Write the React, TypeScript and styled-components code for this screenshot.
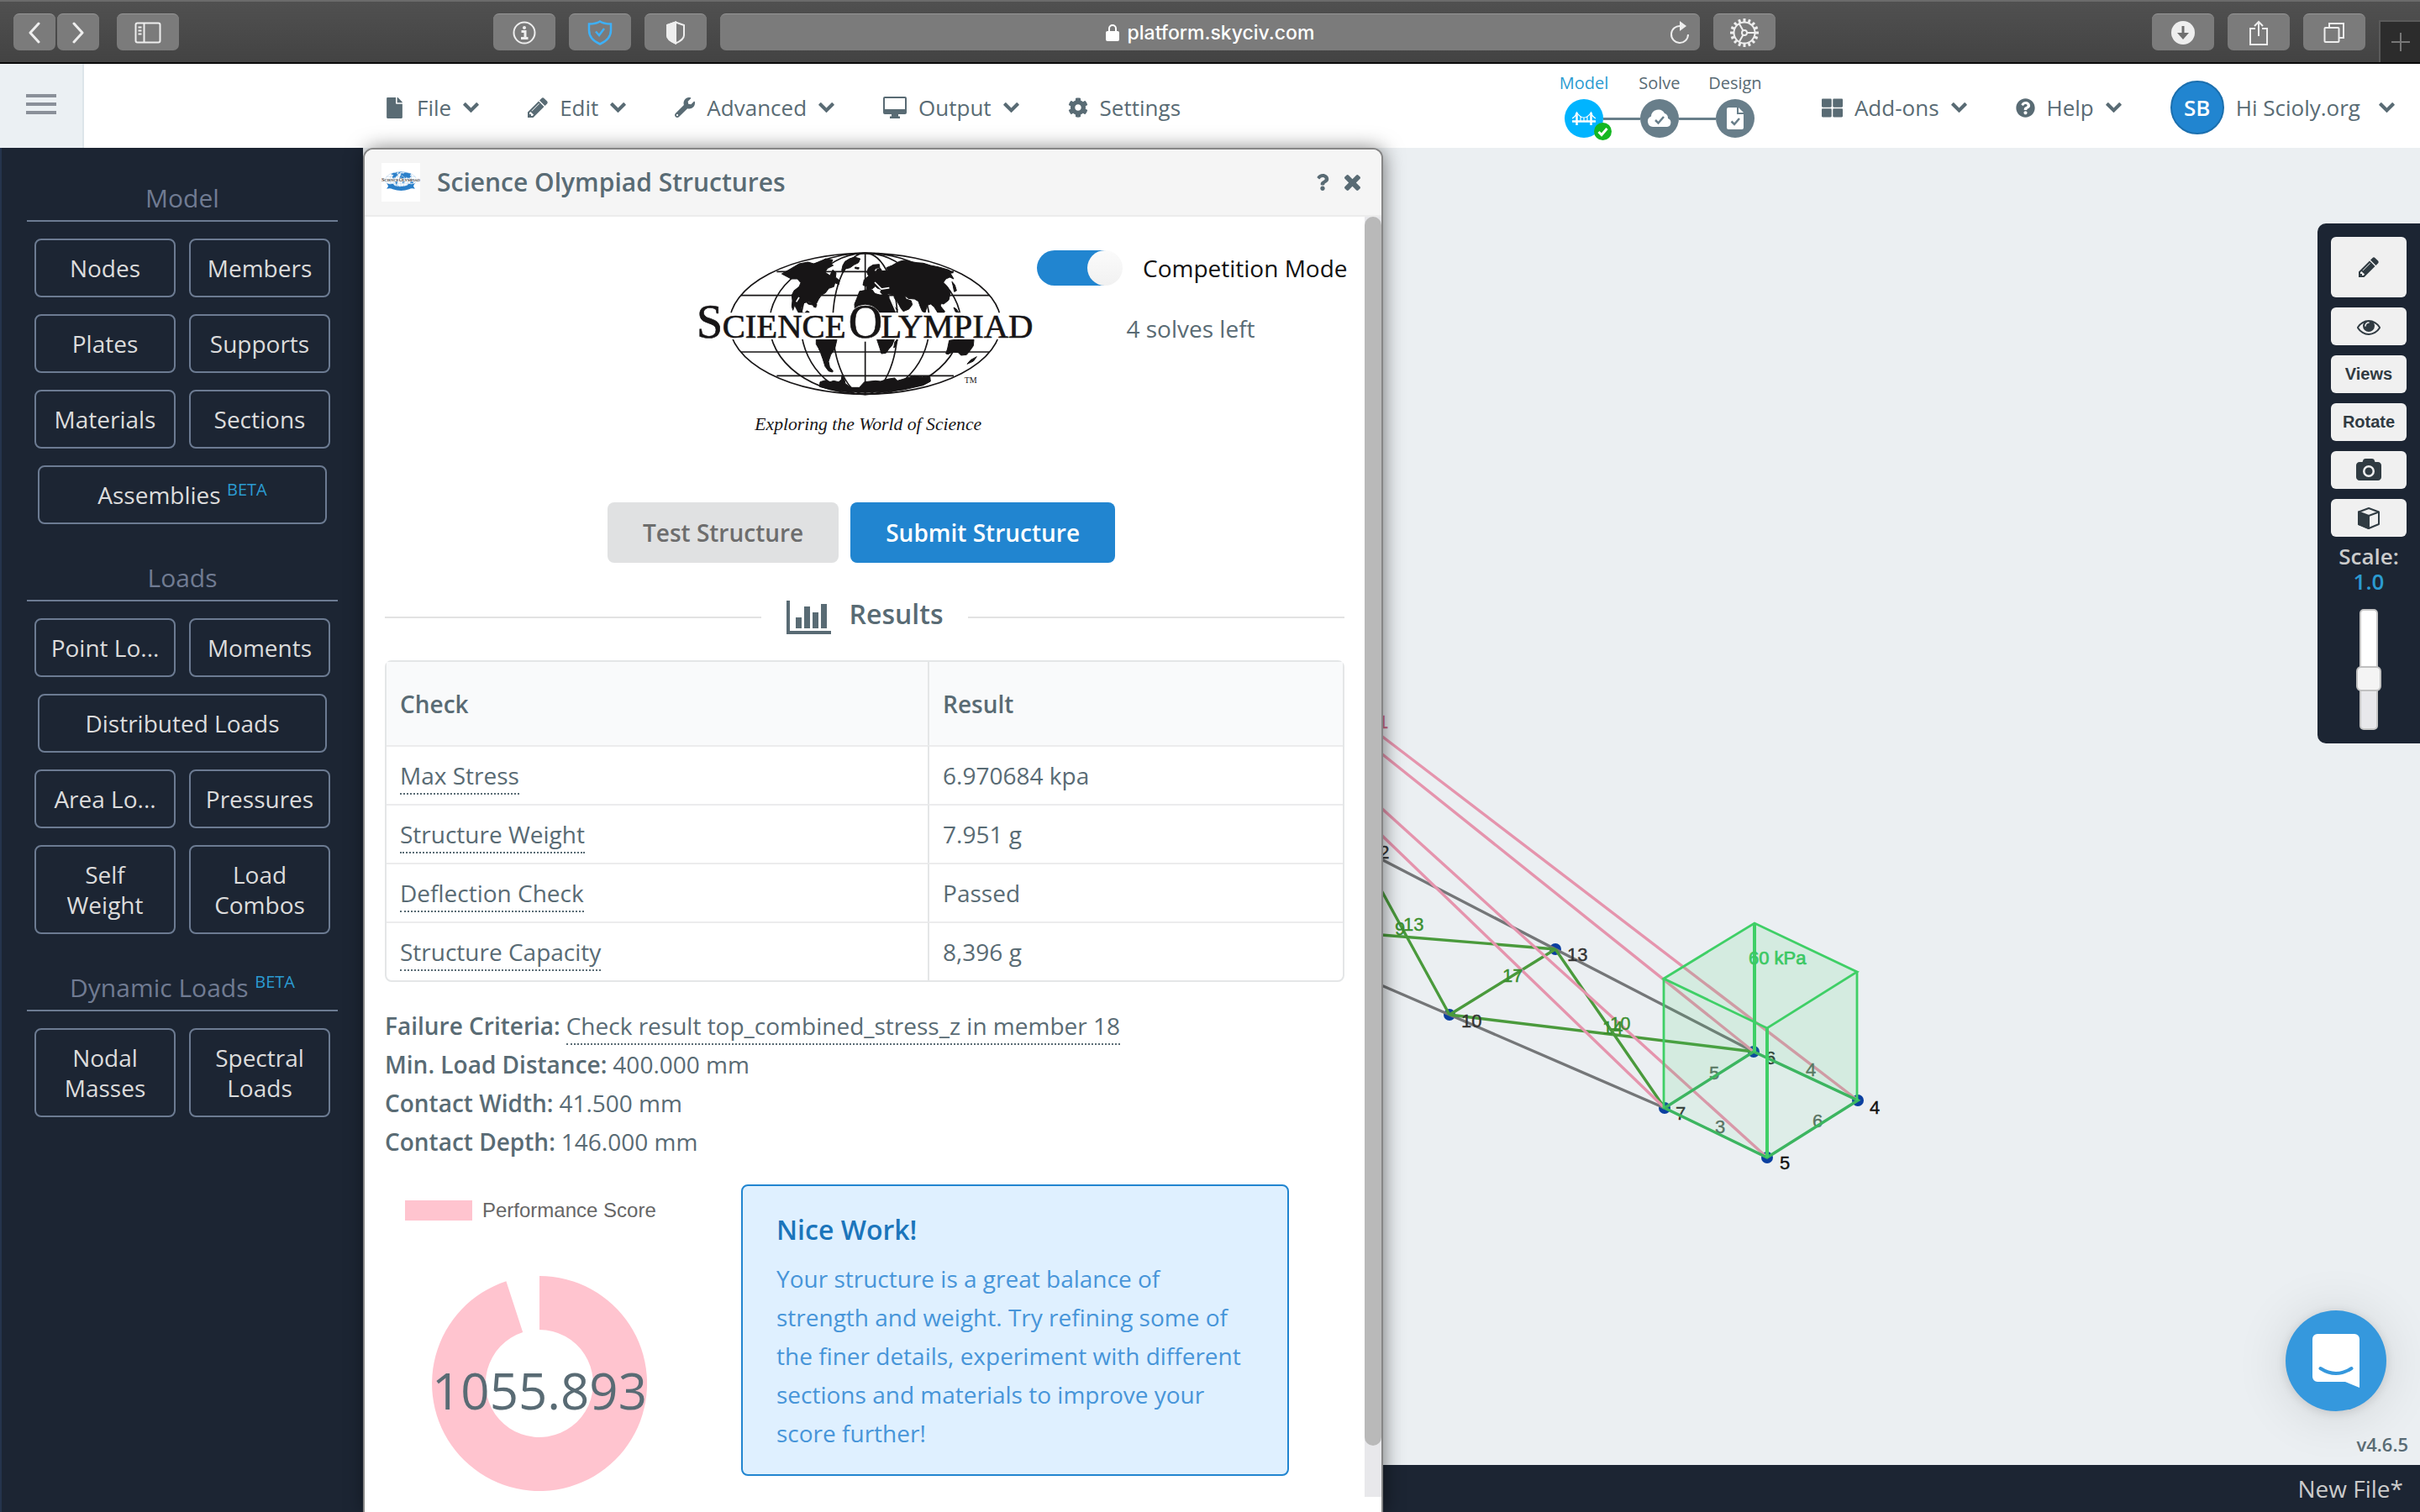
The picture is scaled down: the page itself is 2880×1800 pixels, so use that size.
import React from "react";
import styled, { createGlobalStyle, css } from "styled-components";
import {
  FaWrench,
  FaCog,
  FaQuestionCircle,
  FaQuestion,
  FaThLarge,
  FaFile,
} from "react-icons/fa";

const color = {
  slate: "#596b74",
  blue: "#2185d0",
  sky: "#2b9bd1",
  navy: "#1c2533",
  line: "#6c7b92",
  canvas: "#ebeff2",
};
const sans = `"Open Sans", "Noto Sans", sans-serif`;
const helvetica = `"Liberation Sans", Arial, sans-serif`;

const GlobalStyle = createGlobalStyle`
  * { box-sizing: border-box; }
  body { margin: 0; font-family: ${sans}; font-size: 28px; color: ${color.slate}; background: ${color.canvas}; }
  button, input { font: inherit; color: inherit; margin: 0; }
  button { cursor: pointer; }
  svg { display: block; flex: none; }
`;

const Page = styled.div`
  display: flex;
  flex-direction: column;
  height: 100vh;
  overflow: hidden;
`;

/* ---------- browser chrome ---------- */

const Chrome = styled.header`
  display: grid;
  grid-template-columns: 571px minmax(0, 1fr) 767px;
  align-items: center;
  height: 76px;
  padding-left: 16px;
  flex: none;
  color: #eee;
  background: linear-gradient(#505050, #434343);
  border-top: 2px solid #6b6b6b;
  border-bottom: 2px solid #0a0a0a;
`;
const ChromeGroup = styled.div<{ $gap: number; $end?: boolean }>`
  display: flex;
  align-items: center;
  gap: ${(p) => p.$gap}px;
  ${(p) =>
    p.$end &&
    css`
      align-self: stretch;
      justify-content: flex-end;
    `}
`;
const ChromeButton = styled.button<{ $narrow?: boolean }>`
  display: flex;
  align-items: center;
  justify-content: center;
  width: ${(p) => (p.$narrow ? 50 : 74)}px;
  height: 44px;
  padding: 0;
  flex: none;
  border: 0;
  border-top: 1px solid #979797;
  border-radius: 7px;
  background: #7b7b7b;
`;
const AddressBar = styled.div`
  display: flex;
  align-items: center;
  flex: 1;
  height: 44px;
  padding: 0 12px 0 36px;
  border-top: 1px solid #979797;
  border-radius: 7px;
  background: #7b7b7b;
`;
const Address = styled.a`
  display: flex;
  align-items: center;
  justify-content: center;
  gap: 10px;
  flex: 1;
  color: #fff;
  font: 500 23px Inter, sans-serif;
  text-decoration: none;
`;
const BareButton = styled.button`
  display: flex;
  align-items: center;
  padding: 0;
  border: 0;
  background: none;
`;
const NewTab = styled.button`
  display: flex;
  align-items: center;
  justify-content: center;
  align-self: flex-end;
  width: 49px;
  height: 50px;
  padding: 0;
  border: 2px solid #5a5a5a;
  border-width: 2px 0 0 2px;
  background: #2c2c2c;
`;

/* ---------- application header ---------- */

const TopBar = styled.div`
  display: flex;
  height: 100px;
  padding-right: 30px;
  flex: none;
  background: #fff;
`;
const Burger = styled.button`
  display: flex;
  flex-direction: column;
  align-items: center;
  justify-content: center;
  gap: 6px;
  width: 100px;
  padding: 0 0 4px;
  border: 0;
  border-right: 2px solid #dde5ea;
  background: #ebf0f3;
`;
const BurgerLine = styled.span`
  width: 36px;
  height: 4px;
  background: #8a9099;
`;
const Menu = styled.nav`
  display: flex;
  align-items: center;
  gap: 58px;
  padding: 4px 0 0 357px;
  flex: 1;
`;
const MenuEnd = styled.div`
  display: flex;
  align-items: center;
  gap: 58px;
  padding-top: 4px;
`;
const MenuItem = styled.button`
  display: flex;
  align-items: center;
  gap: 14px;
  padding: 0;
  border: 0;
  background: none;
  font-size: 26px;
  line-height: 36px;
  white-space: nowrap;
`;
const Avatar = styled.span`
  display: flex;
  align-items: center;
  justify-content: center;
  width: 64px;
  height: 64px;
  border: 2px solid #1b6fae;
  border-radius: 50%;
  background: ${color.blue};
  color: #fff;
  font-weight: 600;
`;
const UserName = styled.span`
  padding-right: 8px;
`;
const Steps = styled.div`
  display: flex;
  padding: 11px 58px 0 0;
`;
const Step = styled.button<{ $active?: boolean }>`
  position: relative;
  display: flex;
  flex-direction: column;
  align-items: center;
  gap: 7px;
  width: 90px;
  padding: 0;
  border: 0;
  background: none;
  font-size: 20px;
  line-height: 24px;
  color: ${(p) => (p.$active ? color.sky : color.slate)};
  &:not(:first-child)::before {
    content: "";
    position: absolute;
    top: 53px;
    left: -22px;
    width: 44px;
    height: 3px;
    background: #687e8a;
  }
`;
const StepDisc = styled.span<{ $active?: boolean }>`
  position: relative;
  display: flex;
  align-items: center;
  justify-content: center;
  width: 46px;
  height: 46px;
  border-radius: 50%;
  background: ${(p) => (p.$active ? "#00b4ff" : "#687e8a")};
`;
const DoneBadge = styled.span`
  position: absolute;
  right: -10px;
  bottom: -3px;
`;

/* ---------- side bar ---------- */

const Main = styled.main`
  display: flex;
  flex: 1;
  min-height: 0;
`;
const SideBar = styled.aside`
  display: flex;
  flex-direction: column;
  gap: 44px;
  width: 432px;
  padding: 40px 30px 0;
  flex: none;
  border-left: 2px solid #25344c;
  background: ${color.navy};
`;
const SideHeading = styled.h2`
  margin: 0 0 20px;
  padding-bottom: 6px;
  border-bottom: 2px solid ${color.line};
  font-size: 30px;
  font-weight: 400;
  line-height: 40px;
  text-align: center;
  color: #707b92;
`;
const SideGrid = styled.div`
  display: grid;
  grid-template-columns: 1fr 1fr;
  gap: 20px 16px;
  padding: 0 9px;
`;
const SideButton = styled.button<{ $wide?: boolean }>`
  padding: 15px 8px;
  border: 2px solid ${color.line};
  border-radius: 8px;
  background: none;
  font-size: 28px;
  line-height: 36px;
  color: #dcdcdc;
  white-space: pre-line;
  ${(p) =>
    p.$wide &&
    css`
      grid-column: 1 / -1;
      margin: 0 4px;
    `}
`;
const Beta = styled.sup`
  font-size: 20px;
  line-height: 0;
  color: ${color.sky};
`;

/* ---------- workspace ---------- */

const Workspace = styled.section`
  position: relative;
  display: flex;
  flex-direction: column;
  flex: 1;
  min-width: 0;
`;
const Viewport = styled.div`
  position: relative;
  flex: 1;
  min-height: 0;
  overflow: hidden;
  background: ${color.canvas};
`;
const StatusBar = styled.footer`
  display: flex;
  justify-content: flex-end;
  padding: 8px 20px;
  background: ${color.navy};
  color: #cbcbcb;
  line-height: 40px;
`;
const Version = styled.span`
  position: absolute;
  right: 14px;
  bottom: 10px;
  font-size: 22px;
  font-weight: 600;
  line-height: 30px;
`;
const Chat = styled.button`
  position: absolute;
  right: 40px;
  bottom: 64px;
  display: flex;
  align-items: center;
  justify-content: center;
  width: 120px;
  height: 120px;
  padding: 0;
  border: 0;
  border-radius: 50%;
  background: #3598dd;
  box-shadow: 0 2px 12px rgba(0, 0, 0, 0.12), 0 4px 64px rgba(0, 0, 0, 0.12);
`;
const ToolPanel = styled.div`
  position: absolute;
  top: 90px;
  right: 0;
  display: flex;
  flex-direction: column;
  align-items: center;
  gap: 12px;
  width: 122px;
  padding: 16px;
  border-radius: 10px 0 0 10px;
  background: ${color.navy};
`;
const Tool = styled.button<{ $tall?: boolean }>`
  display: flex;
  align-items: center;
  justify-content: center;
  width: 90px;
  height: ${(p) => (p.$tall ? 72 : 45)}px;
  padding: 0;
  border: 0;
  border-radius: 6px;
  background: #f0f0f0;
  color: #303b42;
  font: 700 20px ${helvetica};
`;
const ScaleLabel = styled.label`
  display: flex;
  flex-direction: column;
  align-items: center;
  margin: -4px 0 6px;
  font-size: 26px;
  font-weight: 600;
  line-height: 30px;
  color: #cbcbcb;
`;
const ScaleValue = styled.span`
  color: ${color.sky};
`;
const ScaleSlider = styled.input`
  writing-mode: vertical-lr;
  direction: rtl;
  appearance: none;
  width: 30px;
  height: 144px;
  background: none;
  &::-webkit-slider-runnable-track {
    width: 22px;
    margin: 0 4px;
    border: 2px solid #c6c6c6;
    border-radius: 5px;
    background: linear-gradient(#fff 60%, #e8e8eb 60%);
  }
  &::-webkit-slider-thumb {
    appearance: none;
    width: 30px;
    height: 30px;
    margin-left: -6px;
    border: 2px solid #c0c0c0;
    border-radius: 6px;
    background: #f4f4f4;
  }
`;

/* ---------- results window ---------- */

const Window = styled.section`
  position: absolute;
  top: 2px;
  bottom: 0;
  left: 2px;
  display: flex;
  flex-direction: column;
  width: 1210px;
  border-radius: 10px 10px 0 0;
  background: #fff;
  box-shadow: 0 0 0 2px #868686, 2px 0 24px rgba(0, 0, 0, 0.55);
  overflow: clip;
  overflow-clip-margin: 30px;
`;
const WindowBar = styled.div`
  display: flex;
  align-items: center;
  gap: 20px;
  height: 80px;
  padding: 0 25px 0 20px;
  flex: none;
  border-bottom: 2px solid #ececec;
  border-radius: 10px 10px 0 0;
  background: #f5f5f5;
`;
const WindowTools = styled.div`
  display: flex;
  align-items: center;
  gap: 16px;
`;
const LogoTile = styled.span`
  display: flex;
  align-items: center;
  width: 46px;
  height: 46px;
  background: #fff;
`;
const WindowTitle = styled.h1`
  margin: 0;
  flex: 1;
  font-size: 30px;
  font-weight: 600;
  line-height: 40px;
`;
const WindowBody = styled.div`
  display: flex;
  flex: 1;
  min-height: 0;
`;
const ScrollTrack = styled.div`
  width: 20px;
  margin-bottom: 18px;
  background: #e8e8eb;
`;
const ScrollThumb = styled.div`
  height: 96%;
  border-radius: 10px;
  background: #b9b9b9;
`;
const Content = styled.div`
  flex: 1;
  min-width: 0;
  padding: 22px 24px 0;
`;
const Intro = styled.div`
  display: grid;
  grid-template-columns: minmax(0, 1fr) 400px minmax(0, 1fr);
`;
const ModePanel = styled.div`
  grid-column: 3;
  padding: 18px 0 0 5px;
`;
const ModeLabel = styled.label`
  display: flex;
  align-items: center;
  gap: 24px;
  line-height: 42px;
  color: #111;
  white-space: nowrap;
`;
const Toggle = styled.input`
  appearance: none;
  display: flex;
  justify-content: flex-end;
  width: 102px;
  height: 42px;
  flex: none;
  border-radius: 21px;
  background: linear-gradient(90deg, ${color.blue} 80%, transparent 80%);
  &::before {
    content: "";
    width: 42px;
    height: 42px;
    border-radius: 50%;
    background: linear-gradient(#fbfbfb, #f1f1f1);
  }
`;
const SolvesLeft = styled.p`
  margin: 30px 0 0;
  line-height: 42px;
  text-align: center;
`;
const Actions = styled.div`
  display: flex;
  justify-content: center;
  gap: 14px;
  margin: 58px 8px 45px 0;
`;
const Action = styled.button<{ $primary?: boolean }>`
  height: 72px;
  padding: 0 42px;
  border: 0;
  border-radius: 8px;
  background: ${(p) => (p.$primary ? color.blue : "#e0e1e2")};
  color: ${(p) => (p.$primary ? "#fff" : "#6d6d6d")};
  font-weight: 600;
`;
const ResultsHeading = styled.h2`
  display: flex;
  align-items: center;
  gap: 30px;
  height: 40px;
  margin: 0 0 31px;
  font-size: 32px;
  font-weight: 600;
  line-height: 32px;
  &::before,
  &::after {
    content: "";
    flex: 1;
    height: 2px;
    background: #e2e2e2;
  }
`;
const ResultsName = styled.span`
  display: flex;
  align-items: flex-start;
  gap: 22px;
`;
const ResultTable = styled.table`
  width: 100%;
  table-layout: fixed;
  border: 2px solid #e4e6e7;
  border-radius: 8px;
  border-spacing: 0;
  line-height: 36px;
  text-align: left;
`;
const HeadCell = styled.th<{ $wide?: boolean }>`
  width: ${(p) => (p.$wide ? "56.6%" : "auto")};
  height: 99px;
  padding: 0 16px;
  border-left: ${(p) => (p.$wide ? "0" : "2px solid #e4e6e7")};
  background: #f9fafb;
  font-weight: 600;
`;
const Cell = styled.td`
  height: 70px;
  padding: 0 16px 1px;
  border-top: 2px solid #ececed;
  & + & {
    border-left: 2px solid #e4e6e7;
  }
`;
const Hint = styled.abbr`
  padding-bottom: 2px;
  border-bottom: 2px dotted ${color.slate};
  text-decoration: none;
`;
const Facts = styled.dl`
  margin: 29px 0 28px;
  line-height: 46px;
`;
const Fact = styled.div`
  display: flex;
  gap: 7px;
`;
const FactName = styled.dt`
  font-weight: 600;
`;
const FactValue = styled.dd`
  margin: 0;
`;
const Outcome = styled.div`
  display: flex;
  align-items: flex-start;
`;
const Score = styled.figure`
  width: 424px;
  margin: 0;
  padding: 16px 0 0 24px;
`;
const Legend = styled.figcaption`
  display: flex;
  align-items: center;
  gap: 12px;
  margin-bottom: 63px;
  color: #666;
  font: 24px/30px ${helvetica};
`;
const Swatch = styled.span`
  width: 80px;
  height: 24px;
  background: #ffc4cf;
`;
const Donut = styled.svg`
  margin-left: 32px;
  overflow: visible;
`;
const Message = styled.div`
  width: 652px;
  padding: 30px 40px 26px;
  border: 2px solid ${color.blue};
  border-radius: 8px;
  background: #dff0ff;
  color: #4795d9;
`;
const MessageTitle = styled.h3`
  margin: 0 0 13px;
  font-size: 32px;
  font-weight: 600;
  line-height: 44px;
  color: #1b75bb;
`;
const MessageText = styled.p`
  margin: 0;
  line-height: 46px;
`;

/* ---------- icons ---------- */

const ChevronDown = () => (
  <svg width="19" height="12" viewBox="90 533 1612 1035" fill="currentColor">
    <path d="M1683 808l-742 741q-19 19-45 19t-45-19l-742-741q-19-19-19-45.500t19-45.500l166-165q19-19 45-19t45 19l531 531 531-531q19-19 45-19t45 19l166 165q19 19 19 45.500t-19 45.500z" />
  </svg>
);
const CloseIcon = () => (
  <svg width="19" height="19" viewBox="302 366 1188 1188" fill="currentColor">
    <path d="M1490 1322q0 40-28 68l-136 136q-28 28-68 28t-68-28l-294-294-294 294q-28 28-68 28t-68-28l-136-136q-28-28-28-68t28-68l294-294-294-294q-28-28-28-68t28-68l136-136q28-28 68-28t68 28l294 294 294-294q28-28 68-28t68 28l136 136q28 28 28 68t-28 68l-294 294 294 294q28 28 28 68z" />
  </svg>
);
const PencilIcon = ({ size = 26 }: { size?: number }) => (
  <svg width={size} height={size} viewBox="128 128 1536 1536" fill="currentColor">
    <path d="M491 1536l91-91-235-235-91 91v107h128v128h107zm523-928q0-22-22-22-10 0-17 7l-542 542q-7 7-7 17 0 22 22 22 10 0 17-7l542-542q7-7 7-17zm-54-192l416 416-832 832h-416v-416zm683 96q0 53-37 90l-166 166-416-416 166-165q36-38 90-38 53 0 91 38l235 234q37 39 37 91z" />
  </svg>
);
const EyeIcon = () => (
  <svg width="28" height="28" viewBox="0 0 1792 1792" fill="currentColor">
    <path d="M1664 960q-152-236-381-353 61 104 61 225 0 185-131.5 316.5t-316.5 131.5-316.5-131.5-131.5-316.5q0-121 61-225-229 117-381 353 133 205 333.5 326.5t434.5 121.5 434.5-121.5 333.5-326.5zm-720-384q0-20-14-34t-34-14q-125 0-214.5 89.5t-89.5 214.5q0 20 14 34t34 14 34-14 14-34q0-86 61-147t147-61q20 0 34-14t14-34zm848 384q0 34-20 69-140 230-376.5 368.5t-499.5 138.5-499.5-139-376.5-368q-20-35-20-69t20-69q140-229 376.5-368t499.5-139 499.5 139 376.5 368q20 35 20 69z" />
  </svg>
);
const CameraIcon = () => (
  <svg width="30" height="28" viewBox="-64 0 1920 1792" fill="currentColor">
    <path d="M896 672q119 0 203.5 84.5t84.5 203.5-84.5 203.5-203.5 84.5-203.5-84.5-84.5-203.5 84.5-203.5 203.5-84.5zm704-416q106 0 181 75t75 181v896q0 106-75 181t-181 75h-1408q-106 0-181-75t-75-181v-896q0-106 75-181t181-75h224l51-136q19-49 69.5-84.5t103.5-35.5h512q53 0 103.5 35.5t69.5 84.5l51 136h224zm-704 1152q185 0 316.5-131.5t131.5-316.5-131.5-316.5-316.5-131.5-316.5 131.5-131.5 316.5 131.5 316.5 316.5 131.5z" />
  </svg>
);
const CubeIcon = () => (
  <svg width="28" height="28" viewBox="0 0 28 28" stroke="currentColor" strokeWidth="2" strokeLinejoin="round" fill="none">
    <path d="M14 2l12 4.500v14.500L14 26 2 21V6.500z" />
    <path d="M2 6.500L14 11v15L2 21z" fill="currentColor" />
    <path d="M14 11l12-4.500" />
  </svg>
);
const DesktopIcon = () => (
  <svg width="28" height="26" viewBox="0 0 28 26" fill="currentColor">
    <path d="M2 0h24a2 2 0 012 2v17a2 2 0 01-2 2H18v2.500h2V26H8v-2.500h2V21H2a2 2 0 01-2-2V2a2 2 0 012-2zm0 2v13h24V2z" fillRule="evenodd" />
  </svg>
);
const BarChartIcon = () => (
  <svg width="53" height="40" viewBox="0 0 53 40" fill="currentColor">
    <path d="M0 0h4v36h49v4H0z" />
    <path d="M11 20h7v13h-7zM21 7h7v26h-7zM31 14h7v19h-7zM41 4h7v29h-7z" />
  </svg>
);
const strokeProps = { fill: "none", stroke: "currentColor", strokeWidth: 2 };
const Chevron = ({ dir }: { dir: 1 | -1 }) => (
  <svg width="16" height="26" viewBox="0 0 16 26" {...strokeProps} strokeWidth={3} strokeLinecap="round" strokeLinejoin="round">
    <path d={dir === 1 ? "M3 2l10 11L3 24" : "M13 2L3 13l10 11"} />
  </svg>
);
const SidebarIcon = () => (
  <svg width="32" height="26" viewBox="0 0 32 26" {...strokeProps}>
    <rect x="1.500" y="1.500" width="29" height="23" rx="2" />
    <path d="M11.500 2v22M4.500 6.500h4M4.500 10.500h4M4.500 14.500h4" />
  </svg>
);
const InfoIcon = () => (
  <svg width="28" height="28" viewBox="0 0 28 28" {...strokeProps}>
    <circle cx="14" cy="14" r="12.500" />
    <circle cx="14" cy="8" r="2" fill="currentColor" stroke="none" />
    <path d="M10.500 12.500H15v8M10 20.500h8.500" strokeWidth="3" />
  </svg>
);
const ShieldCheckIcon = () => (
  <svg width="30" height="30" viewBox="0 0 30 30" fill="none" stroke="#3eb0f7" strokeWidth="2.500">
    <path d="M15 1.500C11 4 7 4.500 2 4.500V12c0 8 5 13 13 16.500C23 25 28 20 28 12V4.500C23 4.500 19 4 15 1.500z" />
    <path d="M10 13.500l4 4.500 6-8" />
  </svg>
);
const HalfShieldIcon = () => (
  <svg width="24" height="28" viewBox="0 0 24 28" {...strokeProps}>
    <path d="M12 1.500L22 5v12c0 4-4 7-10 9.500C6 24 2 21 2 17V5z" />
    <path d="M12 1.500V26.500C6 24 2 21 2 17V5z" fill="currentColor" />
  </svg>
);
const LockIcon = () => (
  <svg width="16" height="22" viewBox="0 0 16 22" fill="currentColor">
    <rect y="9" width="16" height="12" rx="2" />
    <path d="M4 9V6a4 4 0 018 0v3" {...strokeProps} />
  </svg>
);
const ReloadIcon = () => (
  <svg width="24" height="28" viewBox="0 0 24 28" {...strokeProps}>
    <path d="M13 6a10 10 0 109 10" />
    <path d="M12 0l8 6-8 6z" fill="currentColor" stroke="none" />
  </svg>
);
const GearIcon = () => (
  <svg width="36" height="36" viewBox="-18 -18 36 36" {...strokeProps}>
    <circle r="12.500" />
    <circle r="3" />
    <path d="M3 0h9.500M-1.500 -2.600l-4.700 -8.200M-1.500 2.600l-4.700 8.200" />
    {Array.from({ length: 16 }, (_, i) => (
      <path key={i} d="M0-13v-4" strokeWidth="3" transform={`rotate(${i * 22.5})`} />
    ))}
  </svg>
);
const DownloadIcon = () => (
  <svg width="28" height="28" viewBox="0 0 28 28">
    <circle cx="14" cy="14" r="14" fill="currentColor" />
    <path d="M12.500 6h3v8H21l-7 8-7-8h5.500z" fill="#6f6f6f" />
  </svg>
);
const ShareIcon = () => (
  <svg width="24" height="32" viewBox="0 0 24 32" {...strokeProps}>
    <path d="M8 11H2v19h20V11h-6M12 20V3M7 8l5-5 5 5" />
  </svg>
);
const TabsIcon = () => (
  <svg width="26" height="26" viewBox="0 0 26 26" {...strokeProps}>
    <rect x="1.500" y="7" width="17" height="17" rx="1" />
    <path d="M7 7V2h17v17h-5" />
  </svg>
);
const PlusIcon = () => (
  <svg width="22" height="22" viewBox="0 0 22 22" stroke="#777" strokeWidth="2">
    <path d="M11 0v22M0 11h22" />
  </svg>
);
const BridgeIcon = () => (
  <svg width="28" height="18" viewBox="0 0 28 18" fill="none" stroke="#fff" strokeWidth="2">
    <path d="M5.500 2v15M22.500 2v15M0 12.500h28" strokeWidth="2.500" />
    <path d="M0 9Q4 7 5.500 2q4 6 8.500 6t8.500-6Q24 7 28 9M10 7v5M14 8v4M18 7v5" strokeWidth="1.200" />
  </svg>
);
const CheckBadge = () => (
  <svg width="21" height="21" viewBox="0 0 21 21">
    <circle cx="10.500" cy="10.500" r="10.500" fill="#14b722" />
    <path d="M5.500 11l3.500 3.500L15.500 7" fill="none" stroke="#fff" strokeWidth="3" />
  </svg>
);
const CloudCheckIcon = () => (
  <svg width="30" height="22" viewBox="0 0 30 22">
    <path d="M7 21a6.500 6.500 0 01-2-12.500A8.500 8.500 0 0121 5a6 6 0 014 6 5.200 5.200 0 01-1 10z" fill="#fff" />
    <path d="M10 13l3.500 3.500L20 9" fill="none" stroke="#687e8a" strokeWidth="2.500" />
  </svg>
);
const FileCheckIcon = () => (
  <svg width="20" height="26" viewBox="0 0 20 26">
    <path d="M2 0h10v8h8v16a2 2 0 01-2 2H2a2 2 0 01-2-2V2a2 2 0 012-2zM14 0l6 6h-6z" fill="#fff" />
    <path d="M5.500 16.500l3.500 3.500 6-7" fill="none" stroke="#687e8a" strokeWidth="2.500" />
  </svg>
);
const ChatIcon = () => (
  <svg width="56" height="64" viewBox="0 0 56 64">
    <path d="M6 0h44a6 6 0 016 6v58l-17-7H6a6 6 0 01-6-6V6a6 6 0 016-6z" fill="#fff" />
    <path d="M9.500 41q18.500 12 37 0" fill="none" stroke="#3598dd" strokeWidth="4" strokeLinecap="round" />
  </svg>
);

/* Globe emblem with the wordmark laid across the equator */
const OlympiadLogo = ({
  width,
  land = "#171516",
  ink = "#171516",
  tag = true,
}: {
  width: number;
  land?: string;
  ink?: string;
  tag?: boolean;
}) => (
  <svg
    width={width}
    height={(width * 780) / 1200}
    viewBox="60 0 1200 780"
    fontFamily={`"Liberation Serif", "Times New Roman", serif`}
    role="img"
    aria-label="Science Olympiad"
  >
    <g fill="none" stroke={land} strokeWidth="5">
      <ellipse cx="662" cy="316" rx="485" ry="252" />
      <ellipse cx="662" cy="316" rx="342" ry="252" />
      <ellipse cx="662" cy="316" rx="230" ry="252" />
      <ellipse cx="662" cy="316" rx="116" ry="252" />
      <path d="M662 64v504M346 130h632M218 215h888M218 417h888M346 502h632" />
    </g>
    <g fill={land} stroke={land} strokeWidth="3" strokeLinejoin="round">
      <path d="M364 138l32-18 30-18 32-6 20 6 22-6 20-12 26 4-6 14 8 6-20 10-10 14 18 12 10-20 12 10-2 16 14 12-2 14-14-6-4 14-18 6-12 16-14 8-10 14-8 16-2 14-8-2-4-14-14-4-18 4-8 18 2 16 10 2 8-8 8 4-2 12 12 16-26-2-18-16-12-22-6-12-6 18-4-14 2-20-2-20 8-16 18-14 6-14-12-14-22 0z" />
      <path d="M578 126l4-18 8-14 16-10 18-6 20 6-6 14-16 8-14 10-16 4-8 14z" />
      <path d="M626 114l14 2-2 5-12-2zM454 241l20 2 16 6-12 1-20-4z" />
      <path d="M668 132l6-16 16-10 22-2 2 12-12 2-8 8 6 8 4-12 12-4 6 10 20-2-4-10 20-8 14-8 12-6 16-4 22 4 24 4 24 2 26 8 30 6 34 10 16 10-10 2 12 20-14-6-14 6-10 14 16 14 10 22-6 26-18 14-8-2-4 8 16 20-4 8-20-2-14-22-12-10-12 4-8 26-10-4-8-18-6-18-14-8-22-2-14-12 6 14 18 6 4 14-12 16-20 8-8-10-12-22-12-16-2-12-20-2-16 4-12-10 4-10-14-4-8-8-8 8-12 6-8 12-20 4-4-12 20-4 2-12-14-6 4-18 10-10 6-4z" />
      <path d="M642 200l26-2 20-2 8 12 20 6 24-4 14 20 12 26 12 10-8 10H626l-2-30 8-20z" />
      <path d="M487 373h74l-8 34-14 20-8 24 4 20 12 14-2 4-14-4-12-16-8-26-8-22-8-18-8-14z" />
      <path d="M704 373h62l-8 20-12 14-10 14-16 2-6-20zM768 380l10-6-8 24-6 4z" />
      <path d="M962 376l22-3h66l-2 22-14 20-10 12-20 2-10-10-20-2-16 8-8-2 6-18z" />
      <path d="M1060 434l-12 16-22 10 12-14zM972 166l10 12 6 20-8 4-4-20zM978 258l10 6 8 13-12-4z" />
      <path d="M501 524l20-6 16 6 12-4 18 4 10-8 2-16 8 12 4 18 20 14h30l18-20 40-4 18 2 24-8 26-4 10 10 34-10 28-8 26 4 28-2 2 18-26 14-70 16-60 7-78 3-80-4-52-9-30-8z" />
    </g>
    <path d="M696 168l24 24 28-4M750 222l22 50M416 238l10-16" fill="none" stroke="#fff" strokeWidth="5" />
    <path d="M90 277h1140v95H90z" fill="#fff" />
    <ellipse cx="662" cy="314" rx="62" ry="66" fill="#fff" />
    <g fill={ink} stroke={ink} strokeWidth="2">
      <text x="60" y="367" fontSize="168">S</text>
      <text x="152" y="367" fontSize="122">CIENCE</text>
      <text x="602" y="367" fontSize="168">O</text>
      <text x="718" y="367" fontSize="122">LYMPIAD</text>
    </g>
    {tag && (
      <g fill={ink}>
        <text x="1016" y="528" fontSize="30">TM</text>
        <text x="268" y="695" fontSize="65" fontStyle="italic">Exploring the World of Science</text>
      </g>
    )}
    {!tag && (
      <path d="M230 425q90 40 190 10l60 70q180 60 360 0l60-70q100 30 190-10l-40 90 50 80q-110-30-180 10-250 90-510 0-80-40-190-10l50-80z" fill={land} />
    )}
  </svg>
);

/* ---------- structural model ---------- */

type Point = [number, number];
const nodes: Record<string, Point> = {
  n13: [1851, 1130],
  n10: [1725, 1208],
  n7: [1981, 1319],
  n6: [2087, 1252],
  n4: [2211, 1310],
  n5: [2103, 1378],
};
const cubeTop: Point[] = [
  [1980, 1165],
  [2088, 1099],
  [2210, 1157],
  [2103, 1224],
];
const steel = "#747678";
const brace = "#4a9a3c";
const cable = "#e594ad";
const members: { tone: string; from: Point; to: Point }[] = [
  { tone: steel, from: [1644, 1023], to: nodes.n13 },
  { tone: steel, from: nodes.n13, to: nodes.n6 },
  { tone: steel, from: [1644, 1173], to: nodes.n10 },
  { tone: steel, from: nodes.n10, to: nodes.n7 },
  { tone: brace, from: [1644, 1060], to: nodes.n10 },
  { tone: brace, from: [1644, 1113], to: nodes.n13 },
  { tone: brace, from: nodes.n10, to: nodes.n13 },
  { tone: brace, from: nodes.n13, to: nodes.n7 },
  { tone: brace, from: nodes.n10, to: nodes.n6 },
  { tone: cable, from: [1644, 876], to: nodes.n4 },
  { tone: cable, from: [1644, 897], to: nodes.n6 },
  { tone: cable, from: [1644, 962], to: nodes.n5 },
  { tone: cable, from: [1644, 994], to: nodes.n7 },
];
const tags: [string, number, number, string][] = [
  ["1", 1640, 867, "#d06a86"],
  ["12", 1629, 1022, "#333"],
  ["9", 1660, 1113, "#3b8f2f"],
  ["13", 1670, 1108, "#3b8f2f"],
  ["13", 1865, 1144, "#333"],
  ["17", 1788, 1169, "#3b8f2f"],
  ["10", 1739, 1223, "#333"],
  ["10", 1916, 1226, "#3b8f2f"],
  ["14", 1907, 1231, "#3b8f2f"],
  ["5", 2034, 1285, "#5c6d62"],
  ["4", 2149, 1281, "#5c6d62"],
  ["3", 2041, 1349, "#5c6d62"],
  ["6", 2157, 1342, "#5c6d62"],
  ["6", 2101, 1267, "#333"],
  ["7", 1994, 1333, "#333"],
  ["4", 2225, 1326, "#111"],
  ["5", 2118, 1392, "#111"],
];
const points = (list: Point[]) => list.map((p) => p.join(",")).join(" ");

const Model = () => (
  <svg width="2448" height="1568" viewBox="432 176 2448 1568" fontFamily="Liberation Sans, Arial, sans-serif" fontSize="22">
    {Object.values(nodes).map(([x, y]) => (
      <circle key={`${x}-${y}`} cx={x} cy={y} r="7" fill="#0b3fa0" />
    ))}
    {members.map((m, i) => (
      <line key={i} x1={m.from[0]} y1={m.from[1]} x2={m.to[0]} y2={m.to[1]} stroke={m.tone} strokeWidth="3.400" />
    ))}
    {tags.map(([label, x, y, fill]) => (
      <text key={`${label}-${x}`} x={x} y={y} fill={fill} stroke={fill} strokeWidth="0.400">
        {label}
      </text>
    ))}
    <polygon points={points([cubeTop[0], cubeTop[1], cubeTop[2], nodes.n4, nodes.n6, nodes.n7])} fill="#3fd06c" opacity="0.13" />
    <polygon points={points([nodes.n7, nodes.n6, nodes.n4, nodes.n5])} fill="#3fd06c" opacity="0.07" />
    <g stroke="#3fcf66" strokeWidth="2.800" fill="none">
      <polygon points={points(cubeTop)} />
      <polygon points={points([nodes.n7, nodes.n6, nodes.n4, nodes.n5])} stroke="#3cb560" strokeWidth="3.500" />
      <path d="M1980 1165V1319M2210 1157V1310" />
      <path d="M2088 1099V1252M2103 1224V1378" strokeWidth="4" />
    </g>
    <text x="2081" y="1148" fill="#3bc863" stroke="#3bc863" strokeWidth="0.700">
      60 kPa
    </text>
  </svg>
);

/* ---------- page data ---------- */

const sideGroups: { title: string; beta?: boolean; items: { text: string; wide?: boolean; beta?: boolean }[] }[] = [
  {
    title: "Model",
    items: [
      { text: "Nodes" },
      { text: "Members" },
      { text: "Plates" },
      { text: "Supports" },
      { text: "Materials" },
      { text: "Sections" },
      { text: "Assemblies", wide: true, beta: true },
    ],
  },
  {
    title: "Loads",
    items: [
      { text: "Point Lo..." },
      { text: "Moments" },
      { text: "Distributed Loads", wide: true },
      { text: "Area Lo..." },
      { text: "Pressures" },
      { text: "Self\nWeight" },
      { text: "Load\nCombos" },
    ],
  },
  {
    title: "Dynamic Loads",
    beta: true,
    items: [{ text: "Nodal\nMasses" }, { text: "Spectral\nLoads" }],
  },
];
const menuItems = [
  { text: "File", icon: <FaFile size={25} /> },
  { text: "Edit", icon: <PencilIcon size={24} /> },
  { text: "Advanced", icon: <FaWrench size={24} /> },
  { text: "Output", icon: <DesktopIcon /> },
];
const checks = [
  ["Max Stress", "6.970684 kpa"],
  ["Structure Weight", "7.951 g"],
  ["Deflection Check", "Passed"],
  ["Structure Capacity", "8,396 g"],
];
const facts: [string, React.ReactNode][] = [
  ["Failure Criteria:", <Hint key="f">Check result top_combined_stress_z in member 18</Hint>],
  ["Min. Load Distance:", "400.000 mm"],
  ["Contact Width:", "41.500 mm"],
  ["Contact Depth:", "146.000 mm"],
];

export default function App() {
  const [competition, setCompetition] = React.useState(true);
  const [scale, setScale] = React.useState(1);
  return (
    <Page>
      <GlobalStyle />
      <Chrome>
        <ChromeGroup $gap={21}>
          <ChromeGroup $gap={2}>
            <ChromeButton $narrow aria-label="Back"><Chevron dir={-1} /></ChromeButton>
            <ChromeButton $narrow aria-label="Forward"><Chevron dir={1} /></ChromeButton>
          </ChromeGroup>
          <ChromeButton aria-label="Show sidebar"><SidebarIcon /></ChromeButton>
        </ChromeGroup>
        <ChromeGroup $gap={16}>
          <ChromeButton aria-label="Site information"><InfoIcon /></ChromeButton>
          <ChromeButton aria-label="Protection"><ShieldCheckIcon /></ChromeButton>
          <ChromeButton aria-label="Privacy report"><HalfShieldIcon /></ChromeButton>
          <AddressBar>
            <Address href="#"><LockIcon />platform.skyciv.com</Address>
            <BareButton aria-label="Reload"><ReloadIcon /></BareButton>
          </AddressBar>
          <ChromeButton aria-label="Extension settings"><GearIcon /></ChromeButton>
        </ChromeGroup>
        <ChromeGroup $gap={16} $end>
          <ChromeButton aria-label="Downloads"><DownloadIcon /></ChromeButton>
          <ChromeButton aria-label="Share"><ShareIcon /></ChromeButton>
          <ChromeButton aria-label="Show tabs"><TabsIcon /></ChromeButton>
          <NewTab aria-label="New tab"><PlusIcon /></NewTab>
        </ChromeGroup>
      </Chrome>

      <TopBar>
        <Burger aria-label="Menu"><BurgerLine /><BurgerLine /><BurgerLine /></Burger>
        <Menu>
          {menuItems.map((m) => (
            <MenuItem key={m.text}>{m.icon}{m.text}<ChevronDown /></MenuItem>
          ))}
          <MenuItem><FaCog size={24} />Settings</MenuItem>
        </Menu>
        <Steps>
          <Step $active>Model<StepDisc $active><BridgeIcon /><DoneBadge><CheckBadge /></DoneBadge></StepDisc></Step>
          <Step>Solve<StepDisc><CloudCheckIcon /></StepDisc></Step>
          <Step>Design<StepDisc><FileCheckIcon /></StepDisc></Step>
        </Steps>
        <MenuEnd>
          <MenuItem><FaThLarge size={25} />Add-ons<ChevronDown /></MenuItem>
          <MenuItem><FaQuestionCircle size={23} />Help<ChevronDown /></MenuItem>
          <MenuItem><Avatar>SB</Avatar><UserName>Hi Scioly.org</UserName><ChevronDown /></MenuItem>
        </MenuEnd>
      </TopBar>

      <Main>
        <SideBar>
          {sideGroups.map((g) => (
            <nav key={g.title}>
              <SideHeading>{g.title}{g.beta && <> <Beta>BETA</Beta></>}</SideHeading>
              <SideGrid>
                {g.items.map((i) => (
                  <SideButton key={i.text} $wide={i.wide}>
                    {i.text}{i.beta && <> <Beta>BETA</Beta></>}
                  </SideButton>
                ))}
              </SideGrid>
            </nav>
          ))}
        </SideBar>

        <Workspace>
          <Viewport>
            <Model />
            <ToolPanel>
              <Tool $tall aria-label="Edit"><PencilIcon size={24} /></Tool>
              <Tool aria-label="Visibility"><EyeIcon /></Tool>
              <Tool>Views</Tool>
              <Tool>Rotate</Tool>
              <Tool aria-label="Screenshot"><CameraIcon /></Tool>
              <Tool aria-label="Render"><CubeIcon /></Tool>
              <ScaleLabel htmlFor="scale">Scale:<ScaleValue>{scale.toFixed(1)}</ScaleValue></ScaleLabel>
              <ScaleSlider
                id="scale"
                type="range"
                min={0.2}
                max={2.2}
                step={0.1}
                value={scale}
                onChange={(e) => setScale(Number(e.target.value))}
              />
            </ToolPanel>
            <Chat aria-label="Open chat"><ChatIcon /></Chat>
            <Version>v4.6.5</Version>
          </Viewport>
          <StatusBar>New File*</StatusBar>

          <Window>
            <WindowBar>
              <LogoTile><OlympiadLogo width={46} land="#2a7fc9" ink="#222" tag={false} /></LogoTile>
              <WindowTitle>Science Olympiad Structures</WindowTitle>
              <WindowTools>
                <BareButton aria-label="Help"><FaQuestion size={20} /></BareButton>
                <BareButton aria-label="Close"><CloseIcon /></BareButton>
              </WindowTools>
            </WindowBar>
            <WindowBody>
              <Content>
                <Intro>
                  <span />
                  <OlympiadLogo width={400} />
                  <ModePanel>
                    <ModeLabel>
                      <Toggle type="checkbox" checked={competition} onChange={(e) => setCompetition(e.target.checked)} />
                      Competition Mode
                    </ModeLabel>
                    <SolvesLeft>4 solves left</SolvesLeft>
                  </ModePanel>
                </Intro>
                <Actions>
                  <Action>Test Structure</Action>
                  <Action $primary>Submit Structure</Action>
                </Actions>
                <ResultsHeading><ResultsName><BarChartIcon />Results</ResultsName></ResultsHeading>
                <ResultTable>
                  <thead>
                    <tr><HeadCell $wide>Check</HeadCell><HeadCell>Result</HeadCell></tr>
                  </thead>
                  <tbody>
                    {checks.map(([name, value]) => (
                      <tr key={name}><Cell><Hint>{name}</Hint></Cell><Cell>{value}</Cell></tr>
                    ))}
                  </tbody>
                </ResultTable>
                <Facts>
                  {facts.map(([name, value]) => (
                    <Fact key={name}><FactName>{name}</FactName><FactValue>{value}</FactValue></Fact>
                  ))}
                </Facts>
                <Outcome>
                  <Score>
                    <Legend><Swatch />Performance Score</Legend>
                    <Donut width="256" height="256" viewBox="-128 -128 256 256">
                      <path d="M0-128A128 128 0 11-39.600-121.700L-19.800-60.900A64 64 0 100-64z" fill="#ffc4cf" />
                      <text x="0" y="31" textAnchor="middle" fontFamily={sans} fontSize="60" fill={color.slate}>1055.893</text>
                    </Donut>
                  </Score>
                  <Message>
                    <MessageTitle>Nice Work!</MessageTitle>
                    <MessageText>
                      Your structure is a great balance of strength and weight. Try refining some of the finer details,
                      experiment with different sections and materials to improve your score further!
                    </MessageText>
                  </Message>
                </Outcome>
              </Content>
              <ScrollTrack><ScrollThumb /></ScrollTrack>
            </WindowBody>
          </Window>
        </Workspace>
      </Main>
    </Page>
  );
}
